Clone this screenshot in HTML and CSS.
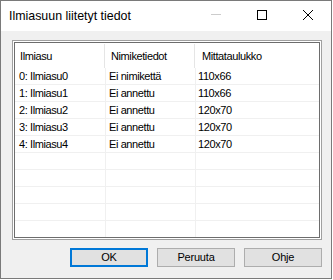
FILE: index.html
```html
<!DOCTYPE html>
<html>
<head>
<meta charset="utf-8">
<link rel="stylesheet" href="styles.css">
</head>
<body>
<div class="window">
  <div class="titlebar">
    <div class="title">Ilmiasuun liitetyt tiedot</div>
    <div class="controls">
      <div class="ctl"><svg class="ico" width="10" height="10" viewBox="0 0 10 10"><line x1="0" y1="4.5" x2="10" y2="4.5" stroke="#cccccc" stroke-width="1"/></svg></div>
      <div class="ctl"><svg class="ico" width="10" height="10" viewBox="0 0 10 10"><rect x="0.5" y="0.5" width="9" height="9" fill="none" stroke="#000" stroke-width="1"/></svg></div>
      <div class="ctl"><svg class="ico" width="10" height="10" viewBox="0 0 10 10"><path d="M0 0 L10 10 M10 0 L0 10" stroke="#000" stroke-width="1"/></svg></div>
    </div>
  </div>
  <div class="client">
    <div class="frame">
      <div class="list">
        <div class="row head">
          <div class="c c1">Ilmiasu</div>
          <div class="c c2">Nimiketiedot</div>
          <div class="c c3">Mittataulukko</div>
        </div>
        <div class="row"><div class="c c1">0: Ilmiasu0</div><div class="c c2">Ei nimikettä</div><div class="c c3">110x66</div></div>
        <div class="row"><div class="c c1">1: Ilmiasu1</div><div class="c c2">Ei annettu</div><div class="c c3">110x66</div></div>
        <div class="row"><div class="c c1">2: Ilmiasu2</div><div class="c c2">Ei annettu</div><div class="c c3">120x70</div></div>
        <div class="row"><div class="c c1">3: Ilmiasu3</div><div class="c c2">Ei annettu</div><div class="c c3">120x70</div></div>
        <div class="row"><div class="c c1">4: Ilmiasu4</div><div class="c c2">Ei annettu</div><div class="c c3">120x70</div></div>
        <div class="row"><div class="c c1"></div><div class="c c2"></div><div class="c c3"></div></div>
        <div class="row"><div class="c c1"></div><div class="c c2"></div><div class="c c3"></div></div>
        <div class="row"><div class="c c1"></div><div class="c c2"></div><div class="c c3"></div></div>
        <div class="row"><div class="c c1"></div><div class="c c2"></div><div class="c c3"></div></div>
        <div class="row"><div class="c c1"></div><div class="c c2"></div><div class="c c3"></div></div>
      </div>
    </div>
    <div class="buttons">
      <div class="btn default">OK</div>
      <div class="btn">Peruuta</div>
      <div class="btn">Ohje</div>
    </div>
  </div>
</div>
</body>
</html>
```
FILE: styles.css
```css
html, body {
  margin: 0;
  padding: 0;
  background: #ffffff;
}
.window {
  box-sizing: border-box;
  width: 332px;
  height: 279px;
  border: 1px solid #7a7a7a;
  background: #f0f0f0;
  display: flex;
  flex-direction: column;
  overflow: hidden;
}
.titlebar {
  height: 30px;
  background: #ffffff;
  display: flex;
  flex-shrink: 0;
}
.title {
  flex: 1;
  padding-left: 8px;
  font-family: "Liberation Sans", Arial, sans-serif;
  font-size: 12.4px;
  line-height: 30px;
  color: #000;
}
.controls {
  display: flex;
}
.ctl {
  width: 46px;
  height: 30px;
  display: flex;
  align-items: center;
  justify-content: center;
}
.ico {
  display: block;
  margin-bottom: 2px;
}
.client {
  flex: 1;
  padding: 9px 0 0 11px;
}
.frame {
  box-sizing: border-box;
  width: 310px;
  height: 200px;
  border: 1px solid #a0a0a0;
  padding: 1px;
  background: #ffffff;
}
.list {
  box-sizing: border-box;
  height: 196px;
  border: 1px solid #6d6d6d;
  background: #ffffff;
  overflow: hidden;
  font-family: "Liberation Sans", Arial, sans-serif;
  font-size: 11px;
  letter-spacing: -0.4px;
  color: #000;
}
.row {
  display: flex;
  height: 17px;
  border-bottom: 1px solid #f0f0f0;
  box-sizing: border-box;
  line-height: 16px;
}
.row .c {
  box-sizing: border-box;
  border-right: 1px solid #f0f0f0;
  white-space: nowrap;
  overflow: hidden;
}
.c1 { width: 91px; padding-left: 4px; }
.c2 { width: 90px; padding-left: 3px; }
.c3 { flex: 1; padding-left: 2px; border-right: none !important; }
.row.head {
  height: 25px;
  border-bottom: none;
  line-height: 24px;
  padding-top: 1px;
}
.row.head .c {
  border-right: 1px solid #e5e5e5;
}
.row.head .c1 { width: 90px; padding-left: 5px; margin-right: 1px; }
.row.head .c2 { padding-left: 5px; margin-right: 1px; width: 89px; }
.row.head .c3 { padding-left: 6px; }
.buttons {
  width: 310px;
  margin-top: 8px;
  display: flex;
  justify-content: flex-end;
  gap: 9px;
}
.btn {
  box-sizing: border-box;
  width: 78px;
  height: 19px;
  border: 1px solid #adadad;
  background: #e1e1e1;
  text-align: center;
  font-family: "Liberation Sans", Arial, sans-serif;
  font-size: 11px;
  letter-spacing: -0.2px;
  line-height: 17px;
  color: #000;
}
.btn.default {
  border: 2px solid #0078d7;
  line-height: 15px;
}
```
